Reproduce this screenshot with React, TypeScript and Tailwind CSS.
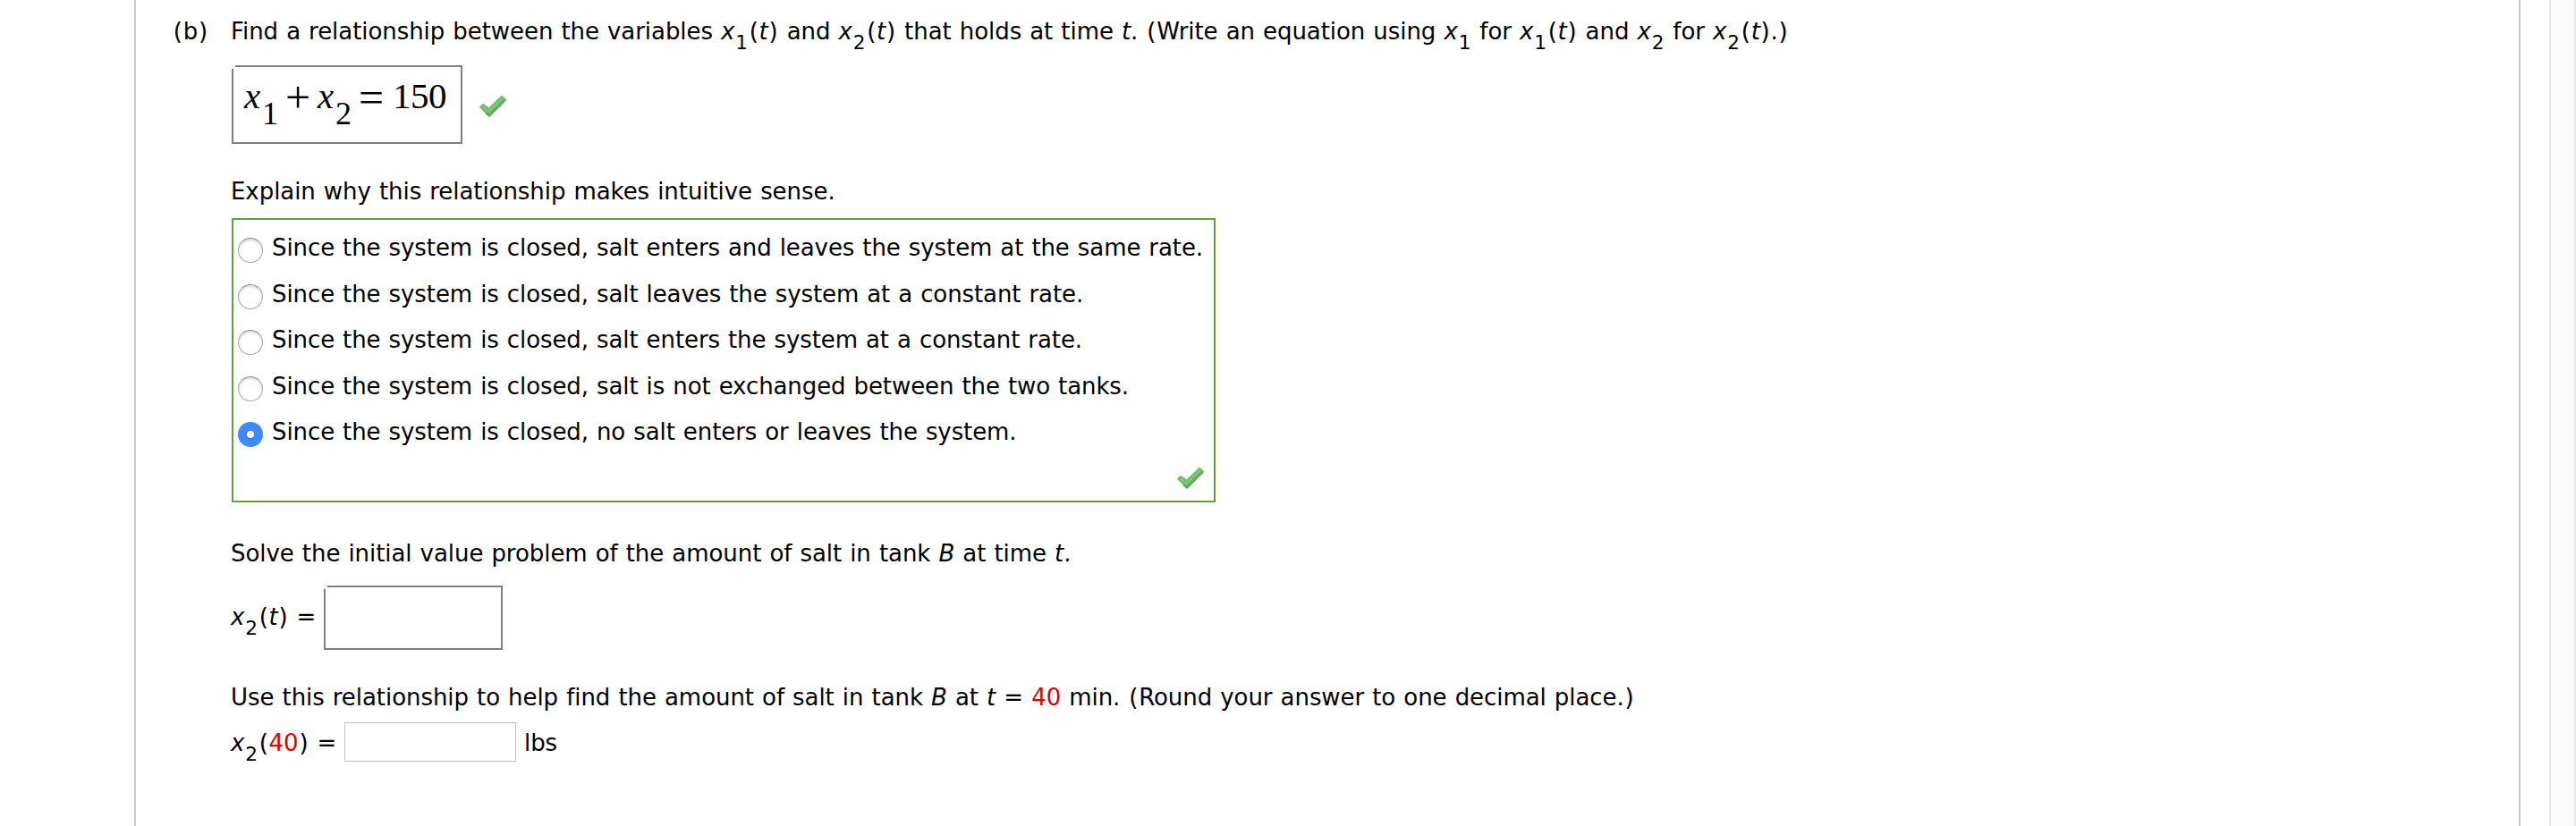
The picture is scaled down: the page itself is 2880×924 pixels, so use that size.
import type { ReactNode } from "react";

const options = [
  {
    text: "Since the system is closed, salt enters and leaves the system at the same rate.",
    className: "h-[52px]",
  },
  {
    text: "Since the system is closed, salt leaves the system at a constant rate.",
    className: "h-[51px]",
  },
  {
    text: "Since the system is closed, salt enters the system at a constant rate.",
    className: "h-[52px]",
  },
  {
    text: "Since the system is closed, salt is not exchanged between the two tanks.",
    className: "h-[51px]",
  },
  {
    text: "Since the system is closed, no salt enters or leaves the system.",
    className: "h-[51px]",
    checked: true,
  },
];

function Sub({ children }: { children: ReactNode }) {
  return (
    <span className="relative top-[11px] px-[0.9px] text-[21.6px] leading-none">
      {children}
    </span>
  );
}

function Paren({ children }: { children: string }) {
  return <span className="px-[0.85px]">{children}</span>;
}

function Fn({ index, arg }: { index: number; arg?: ReactNode }) {
  return (
    <>
      <i>x</i>
      <Sub>{index}</Sub>
      {arg ? (
        <>
          <Paren>(</Paren>
          {arg}
          <Paren>)</Paren>
        </>
      ) : null}
    </>
  );
}

function CheckMark() {
  return (
    <svg width="32" height="26" viewBox="0 0 32 26" className="block">
      <path
        d="M1.3 13.7 L5 10.2 L11.5 14.8 L26 1 L30.8 5.6 L12 24.5 Z"
        fill="#68b662"
        stroke="#84bf7f"
        strokeWidth="1"
        strokeLinejoin="round"
      />
      <path
        d="M4 13 L11.6 18.5 L26.8 3.8"
        fill="none"
        stroke="#7cc674"
        strokeWidth="3"
      />
      <path
        d="M8 20.5 L12.1 23.8 L30 6"
        fill="none"
        stroke="#57a252"
        strokeWidth="1.6"
      />
    </svg>
  );
}

function Radio({ checked }: { checked?: boolean }) {
  if (checked) {
    return (
      <span className="flex size-7 items-center justify-center rounded-full bg-[#3f88fd]">
        <span className="size-2 rounded-full bg-white shadow-[0_1px_2px_#1d5fd0]" />
      </span>
    );
  }

  return (
    <span className="block size-7 rounded-full border border-[#a8a8a8] border-t-[#8f8f8f] bg-white shadow-[inset_0_2px_3px_#dadada]" />
  );
}

// Math entry box, its top-left corner is notched
function MathBox({
  className,
  children,
}: {
  className: string;
  children?: ReactNode;
}) {
  return (
    <div className={`relative border-2 border-[#808080] ${className}`}>
      <span className="absolute -top-0.5 -left-0.5 size-1 bg-white">
        <span className="block size-full rounded-br-[2px] bg-[#eeeeee]" />
      </span>
      {children}
    </div>
  );
}

export default function App() {
  return (
    <div className="flex h-[924px] w-[2880px] overflow-hidden bg-white font-['DejaVu_Sans',Verdana,sans-serif] text-[26px] leading-8 tracking-[-0.06px] whitespace-nowrap text-black [word-spacing:0.9px]">
      <main className="ml-[150px] flex w-[2668px] border-x-2 border-[#cacaca] pt-[19px] pl-[41px]">
        <div className="w-[65px] shrink-0">
          <Paren>(</Paren>b<Paren>)</Paren>
        </div>

        <div className="flex flex-col">
          <p className="h-8">
            Find a relationship between the variables <Fn index={1} arg={<i>t</i>} />{" "}
            and <Fn index={2} arg={<i>t</i>} /> that holds at time <i>t</i>.{" "}
            <Paren>(</Paren>Write an equation using <Fn index={1} /> for{" "}
            <Fn index={1} arg={<i>t</i>} /> and <Fn index={2} /> for{" "}
            <Fn index={2} arg={<i>t</i>} />.<Paren>)</Paren>
          </p>

          <div className="mt-[22px] ml-px flex">
            <MathBox className="h-[88px] w-[258px]">
              <div className="flex items-baseline pt-[6px] pl-[12px] font-['Liberation_Serif',serif] text-[41px] leading-[46px] tracking-normal [word-spacing:0]">
                <i className="w-[20px]">x</i>
                <span className="relative top-[18px] w-[26px] text-[36px]">1</span>
                <span className="relative top-[5px] w-[36px] text-[50px] leading-[46px]">
                  +
                </span>
                <i className="w-[20px]">x</i>
                <span className="relative top-[18px] w-[26px] text-[36px]">2</span>
                <span className="relative top-[5px] w-[38px] text-[50px] leading-[46px]">
                  =
                </span>
                <span className="tracking-[-0.5px]">150</span>
              </div>
            </MathBox>
            <div className="mt-[33px] ml-[18px]">
              <CheckMark />
            </div>
          </div>

          <p className="mt-[37px] h-8">
            Explain why this relationship makes intuitive sense.
          </p>

          <div className="mt-[14px] ml-px flex h-[318px] w-[1100px] flex-col border-2 border-[#669f33] pt-[15px] pl-[5px]">
            {options.map((option) => (
              <div key={option.text} className={`flex ${option.className}`}>
                <div className="shrink-0 pt-[5px]">
                  <Radio checked={option.checked} />
                </div>
                <span className="ml-[10px] tracking-[-0.09px]">{option.text}</span>
              </div>
            ))}
            <div className="mt-1 mr-[10px] flex justify-end">
              <CheckMark />
            </div>
          </div>

          <p className="mt-[41px] h-8">
            Solve the initial value problem of the amount of salt in tank{" "}
            <i>B</i> at time <i>t</i>.
          </p>

          <div className="mt-5 flex">
            <div className="w-[104px] pt-[19px]">
              <Fn index={2} arg={<i>t</i>} /> =
            </div>
            <MathBox className="h-[72px] w-[200px]" />
          </div>

          <p className="mt-[37px] h-8">
            Use this relationship to help find the amount of salt in tank{" "}
            <i>B</i> at <i>t</i> = <span className="text-[#dd0000]">40</span> min.{" "}
            <Paren>(</Paren>Round your answer to one decimal place.
            <Paren>)</Paren>
          </p>

          <div className="mt-3 flex">
            <div className="w-[127px] pt-[7px]">
              <Fn index={2} arg={<span className="text-[#dd0000]">40</span>} /> =
            </div>
            <div className="h-11 w-48 border border-[#bfbfbf]" />
            <span className="ml-[9px] pt-[7px]">lbs</span>
          </div>
        </div>
      </main>

      <aside className="ml-8 w-[30px] border-x-2 border-[#e8e8e8] bg-[#fafafa]" />
    </div>
  );
}
